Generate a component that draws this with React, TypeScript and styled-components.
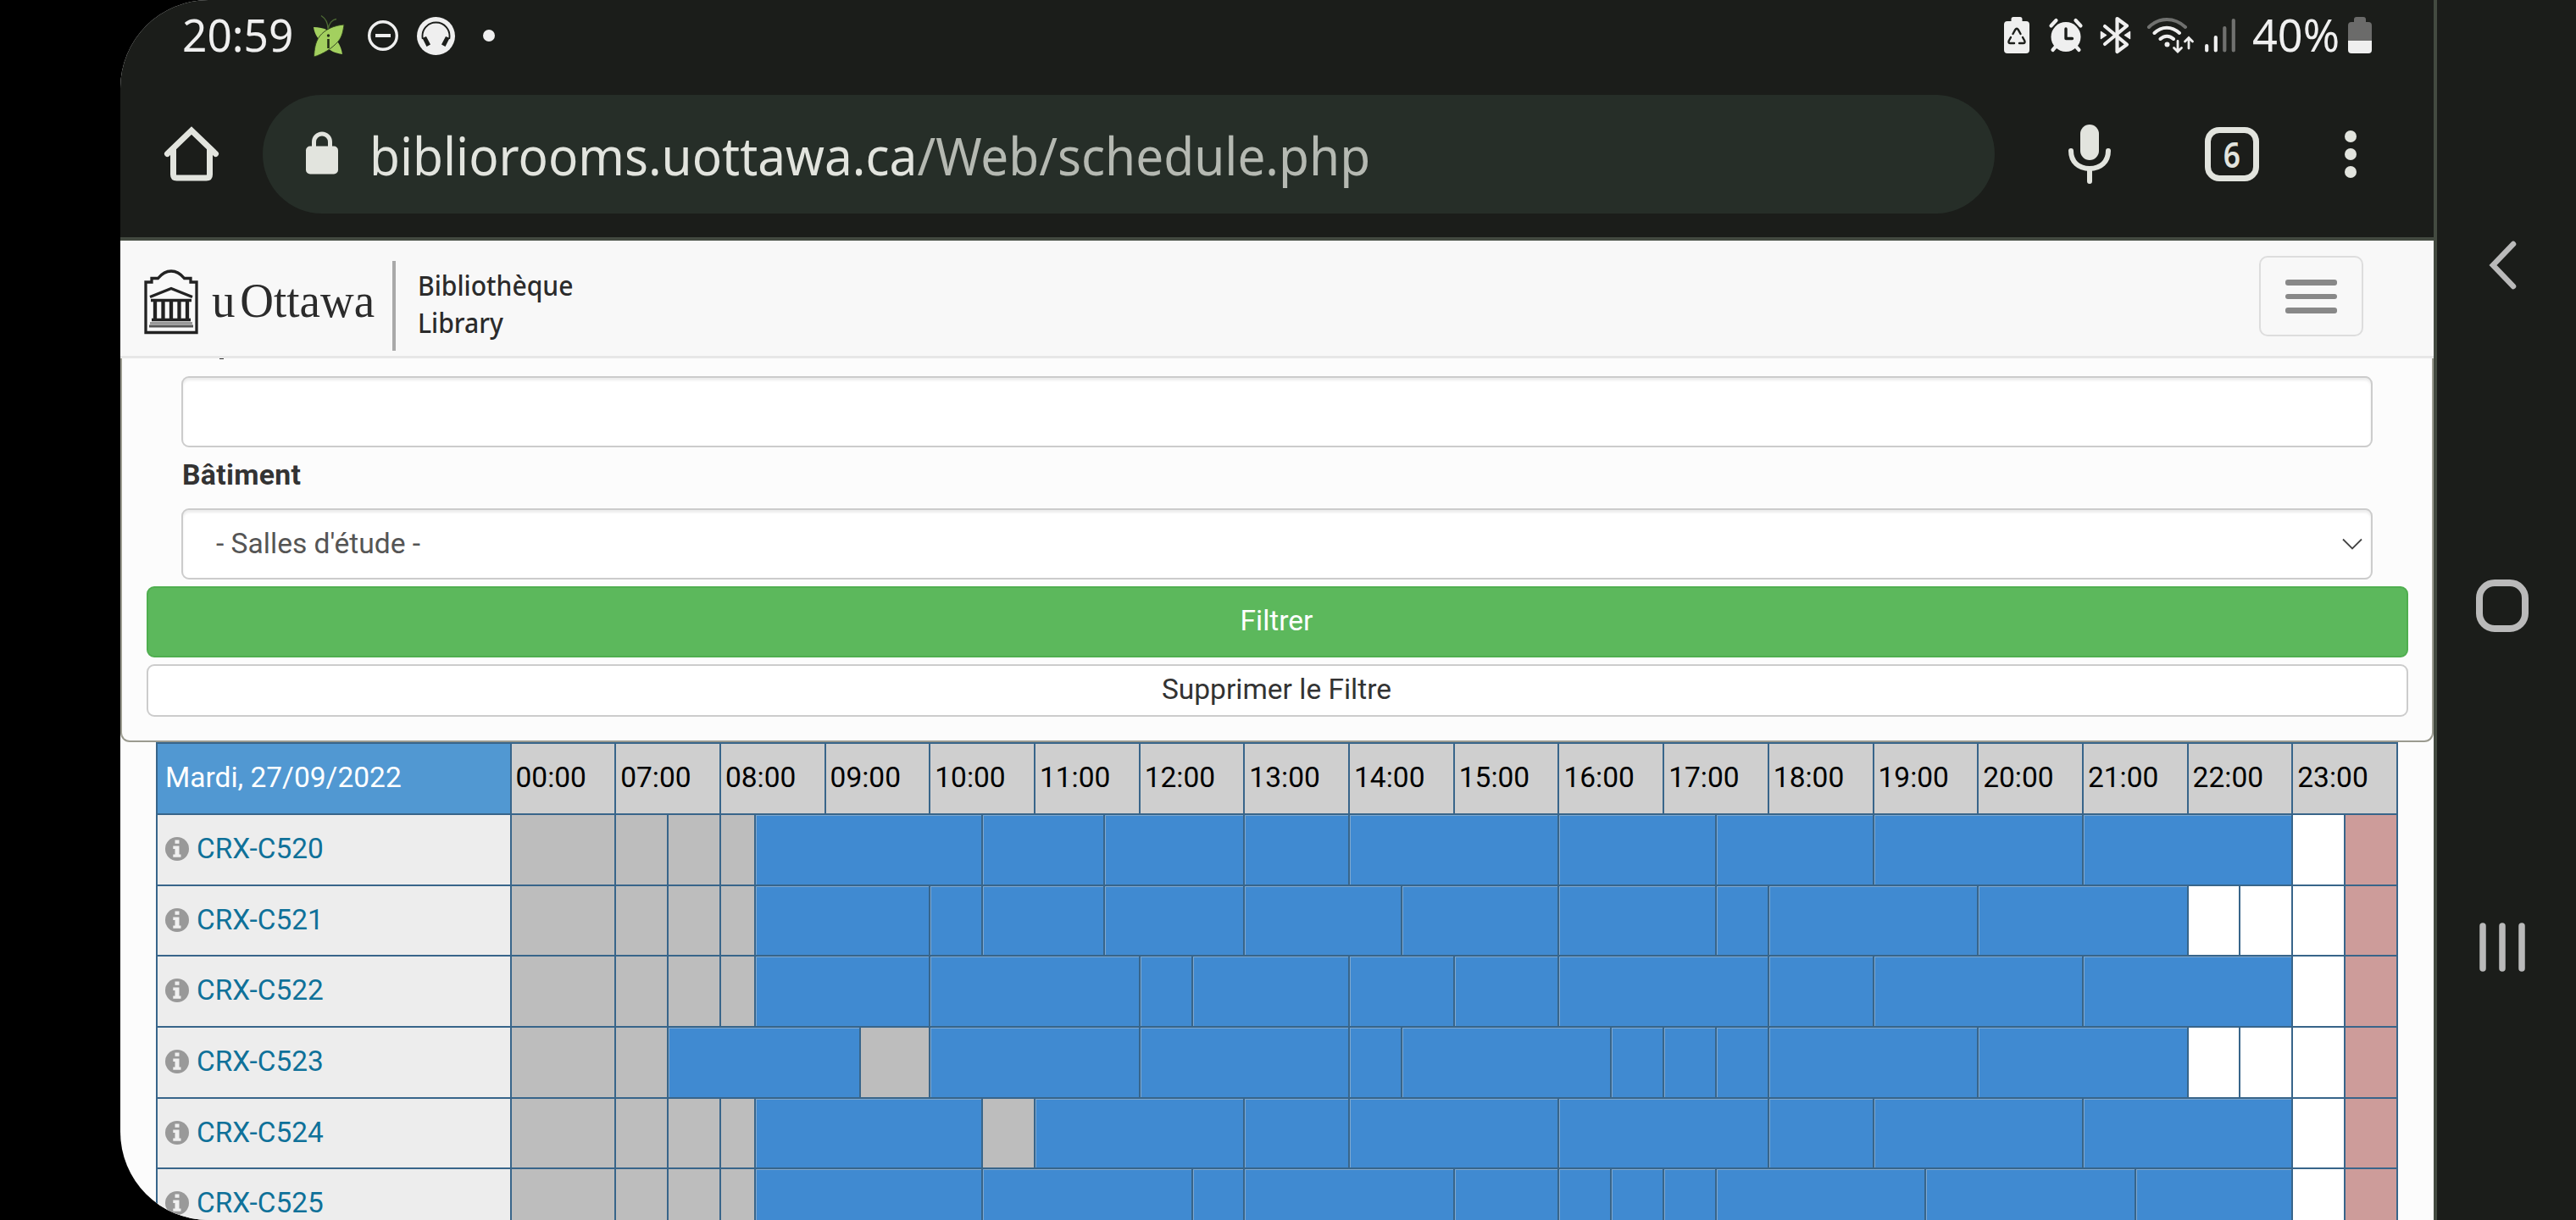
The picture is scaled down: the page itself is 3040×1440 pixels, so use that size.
import React from "react";
import styled, { createGlobalStyle } from "styled-components";

const GlobalStyle = createGlobalStyle`
  *, *::before, *::after { box-sizing: border-box; }
  body { margin: 0; background: #000; overflow: hidden; }
`;

const ui = `"Noto Sans", "Open Sans", sans-serif`;
const web = `Roboto, "Liberation Sans", sans-serif`;
const ink = "#38658a";

const Screen = styled.div`
  display: flex;
  width: 3040px;
  height: 1440px;
  padding-left: 142px;
  background: #000;
  overflow: hidden;
`;

const Browser = styled.main`
  display: flex;
  flex-direction: column;
  width: 2730px;
  height: 1440px;
  background: #fcfcfc;
  border-radius: 104px 0 0 104px;
  overflow: hidden;
`;

const BrowserTop = styled.header`
  flex: none;
  height: 284px;
  background: #1b1d1a;
  border-bottom: 4px solid #434a40;
`;

const StatusBar = styled.div`
  display: flex;
  height: 84px;
  padding: 0 73px 0 73px;
  justify-content: space-between;
`;

const StatusGroup = styled.div`
  display: flex;
  align-items: flex-start;
`;

const Glyph = styled.svg<{ $ml?: number; $mt?: number }>`
  flex: none;
  display: block;
  overflow: visible;
  margin-left: ${(p) => p.$ml ?? 0}px;
  margin-top: ${(p) => p.$mt ?? 0}px;
`;

const Squeezed = styled.span<{ $scale: number }>`
  display: inline-block;
  white-space: pre;
  transform: scaleX(${(p) => p.$scale});
  transform-origin: left center;
`;

const StatusText = styled.div<{ $w: number; $ml?: number }>`
  flex: none;
  width: ${(p) => p.$w}px;
  margin-left: ${(p) => p.$ml ?? 0}px;
  font: 400 53px/82px ${ui};
  color: #efefef;
  white-space: nowrap;
`;

const Toolbar = styled.div`
  display: flex;
  height: 196px;
  padding: 28px 0 0 52px;
`;

const AddressBar = styled.div`
  display: flex;
  flex: none;
  width: 2044px;
  height: 140px;
  margin-left: 52px;
  padding-left: 51px;
  border-radius: 70px;
  background: #262e28;
`;

const Url = styled.div`
  width: 1178px;
  margin-left: 37px;
  font: 400 62px/143px ${ui};
  color: #b5b9b2;
  white-space: nowrap;
`;

const Host = styled.span`
  color: #e2e4de;
`;

const TabCount = styled.div`
  flex: none;
  width: 64px;
  height: 64px;
  margin: 38px 0 0 111px;
  border: 7px solid #e2e4de;
  border-radius: 17px;
  font: 600 41px/51px ${ui};
  text-align: center;
  color: #e2e4de;
`;

const TabDigit = styled.span`
  display: inline-block;
  transform: scaleX(0.86);
`;

const Dots = styled.div`
  display: flex;
  flex-direction: column;
  gap: 7px;
  margin: 42px 0 0 101px;
`;

const Dot = styled.i`
  width: 14px;
  height: 14px;
  border-radius: 50%;
  background: #e2e4de;
`;

const SiteHeader = styled.div`
  flex: none;
  display: flex;
  height: 139px;
  padding-left: 28px;
  background: #f8f8f8;
  border-bottom: 3px solid #e7e7e7;
`;

const Wordmark = styled.div`
  width: 213px;
  margin-left: 16px;
  font: 400 57px/142px "Liberation Serif", serif;
  color: #2b2b2b;
  white-space: nowrap;
`;

const WordmarkU = styled.span`
  margin-right: 6px;
`;

const LogoRule = styled.div`
  width: 4px;
  height: 106px;
  margin-top: 24px;
  background: #a9a9a9;
`;

const Library = styled.div`
  display: flex;
  flex-direction: column;
  margin: 31px 0 0 26px;
  font: 500 32px/44px ${ui};
  color: #2b2b2b;
`;

const MenuButton = styled.button`
  display: flex;
  flex-direction: column;
  align-items: center;
  gap: 10px;
  width: 123px;
  height: 95px;
  margin: 18px 83px 0 auto;
  padding: 26px 0 0;
  border: 2px solid #ddd;
  border-radius: 10px;
  background: transparent;
`;

const MenuBar = styled.span`
  width: 61px;
  height: 6.5px;
  border-radius: 3px;
  background: #888;
`;

const FilterPanel = styled.section`
  flex: none;
  height: 453px;
  padding: 0 28px 0;
  border: 2px solid #9b9b90;
  border-top: 0;
  border-radius: 0 0 11px 11px;
  background: #fcfcfc;
`;

const Field = styled.div`
  display: flex;
  align-items: center;
  justify-content: space-between;
  height: 84px;
  margin: 0 42px;
  padding: 0 10px 0 39px;
  border: 2.5px solid #ccc;
  border-radius: 9px;
  background: #fff;
  box-shadow: inset 0 3px 3px rgba(0, 0, 0, 0.075);
  font: 400 33.6px/80px ${web};
  color: #555;
`;

const LabelTail = styled.div`
  width: 5px;
  height: 1px;
  margin: 0 0 20px 87px;
  background: #333;
`;

const FieldLabel = styled.div`
  height: 72px;
  margin: 0 43px;
  font: 700 33.8px/66px ${web};
  letter-spacing: 0.3px;
  color: #333;
`;

const PanelButton = styled.button<{ $primary?: boolean }>`
  display: block;
  width: 2669px;
  height: ${(p) => (p.$primary ? 84 : 62)}px;
  margin: 8px 0 0 1px;
  padding: 0 2px 2px 0;
  border: 2.5px solid ${(p) => (p.$primary ? "#4fae4f" : "#ccc")};
  border-radius: 9px;
  background: ${(p) => (p.$primary ? "#5cb85c" : "#fff")};
  color: ${(p) => (p.$primary ? "#fff" : "#333")};
  font: 400 33.5px/1 ${web};
`;

const Schedule = styled.section`
  flex: none;
  width: 2646px;
  margin-left: 42px;
  border: 2px solid ${ink};
  border-bottom: 0;
`;

const Row = styled.div<{ $h: number }>`
  display: grid;
  grid-template-columns: 415.5px repeat(108, 1fr);
  height: ${(p) => p.$h}px;
`;

const Head = styled.div<{ $day?: boolean }>`
  grid-column: span ${(p) => (p.$day ? 1 : 6)};
  padding-left: ${(p) => (p.$day ? 9 : 5)}px;
  border-left: ${(p) => (p.$day ? 0 : 2)}px solid ${ink};
  background: ${(p) => (p.$day ? "#5198d2" : "#cfcfcf")};
  color: ${(p) => (p.$day ? "#fff" : "#000")};
  font: 400 33.5px/79px ${web};
  white-space: nowrap;
`;

const RoomCell = styled.div`
  display: flex;
  align-items: center;
  gap: 9px;
  padding: 0 0 2px 9px;
  border-top: 2px solid ${ink};
  background: #ededed;
  color: #0f7199;
  font: 400 33.4px/80px ${web};
  white-space: nowrap;
`;

const fills = { past: "#bdbdbd", busy: "#408ad1", open: "#ffffff", shut: "#cd9c9a" };
type Kind = keyof typeof fills;

const Slot = styled.div<{ $kind: Kind; $span: number }>`
  grid-column: span ${(p) => p.$span};
  border-top: 2px solid ${ink};
  border-left: 2px solid ${ink};
  background: ${(p) => fills[p.$kind]};
  box-shadow: inset 1px 1px 0 rgba(205, 205, 205, ${(p) => (p.$kind === "busy" ? 0.45 : 0)});
`;

const NavBar = styled.nav`
  flex: none;
  display: flex;
  flex-direction: column;
  align-items: center;
  width: 168px;
  height: 1440px;
  padding-right: 10px;
  border-left: 4px solid #434a40;
  background: #1b1d1a;
`;

const hours = ["00:00", ...Array.from({ length: 17 }, (_, i) => `${String(i + 7).padStart(2, "0")}:00`)];

/* Slots are [kind, length]; one unit is ten minutes, the 00:00 column is six. */
const early: [Kind, number][] = [["past", 6], ["past", 3], ["past", 3], ["past", 2]];
const rooms: { name: string; slots: [Kind, number][] }[] = [
  {
    name: "CRX-C520",
    slots: [...early, ["busy", 13], ["busy", 7], ["busy", 8], ["busy", 6], ["busy", 12], ["busy", 9], ["busy", 9], ["busy", 12], ["busy", 12], ["open", 3], ["shut", 3]],
  },
  {
    name: "CRX-C521",
    slots: [...early, ["busy", 10], ["busy", 3], ["busy", 7], ["busy", 8], ["busy", 9], ["busy", 9], ["busy", 9], ["busy", 3], ["busy", 12], ["busy", 12], ["open", 3], ["open", 3], ["open", 3], ["shut", 3]],
  },
  {
    name: "CRX-C522",
    slots: [...early, ["busy", 10], ["busy", 12], ["busy", 3], ["busy", 9], ["busy", 6], ["busy", 6], ["busy", 12], ["busy", 6], ["busy", 12], ["busy", 12], ["open", 3], ["shut", 3]],
  },
  {
    name: "CRX-C523",
    slots: [["past", 6], ["past", 3], ["busy", 11], ["past", 4], ["busy", 12], ["busy", 12], ["busy", 3], ["busy", 12], ["busy", 3], ["busy", 3], ["busy", 3], ["busy", 12], ["busy", 12], ["open", 3], ["open", 3], ["open", 3], ["shut", 3]],
  },
  {
    name: "CRX-C524",
    slots: [...early, ["busy", 13], ["past", 3], ["busy", 12], ["busy", 6], ["busy", 12], ["busy", 12], ["busy", 6], ["busy", 12], ["busy", 12], ["open", 3], ["shut", 3]],
  },
  {
    name: "CRX-C525",
    slots: [...early, ["busy", 13], ["busy", 12], ["busy", 3], ["busy", 12], ["busy", 6], ["busy", 3], ["busy", 3], ["busy", 3], ["busy", 12], ["busy", 12], ["busy", 9], ["open", 3], ["shut", 3]],
  },
];

const InfoIcon = () => (
  <Glyph width="28" height="28" viewBox="0 0 28 28">
    <circle cx="14" cy="14" r="14" fill="#999" />
    <path d="M11.5 3.5h5v4.2h-5zM9.3 10.5h7.2v10h2v3.2H9.3v-3.2h2.2v-6.6H9.3z" fill="#f0f0f0" />
  </Glyph>
);

const LeftStatus = () => (
  <StatusGroup>
    <StatusText $w={155}><Squeezed $scale={0.97}>20:59</Squeezed></StatusText>
    <Glyph $mt={18} width="36" height="50" viewBox="0 0 36 50">
      <path d="M17 16C17 8 13 3 9 0.5M17.500 16C18 10 22 5 27 4.500" fill="none" stroke="#4e6b34" strokeWidth="1.300" />
      <path d="M0 14C6 14 12 15 17 18C26 26 33 36 34 46C26 45 19 42 14 36C6 30 1 22 0 14z" fill="#a3d05f" />
      <path d="M36 11C25 12 14 16 7 25C2 32 1 40 0.500 49C11 46 22 39 29 31C34 25 35 18 36 11z" fill="#a3d05f" stroke="#2a3a1a" strokeWidth="0.900" />
      <path d="M17.500 28v11" stroke="#222c16" strokeWidth="2.600" />
      <circle cx="17.500" cy="24" r="1.700" fill="#222c16" />
    </Glyph>
    <Glyph $ml={28} $mt={24} width="36" height="36" viewBox="0 0 36 36">
      <circle cx="18" cy="18" r="16.300" fill="none" stroke="#efefef" strokeWidth="3.400" />
      <path d="M9 18h18" stroke="#efefef" strokeWidth="4" />
    </Glyph>
    <Glyph $ml={22} $mt={20} width="45" height="45" viewBox="0 0 45 45">
      <circle cx="22.500" cy="22.500" r="22.500" fill="#efefef" />
      <path d="M6.800 26c-2-11 6-19.500 15.700-19.500S40.200 15 38.200 26" fill="none" stroke="#1b1d1a" strokeWidth="1.900" />
      <path d="M6.500 25l4.500-2 5 9.500-4.500 2.500zM38.500 25l-4.500-2-5 9.500 4.500 2.500z" fill="#1b1d1a" />
    </Glyph>
    <Glyph $ml={33} $mt={35} width="14" height="14" viewBox="0 0 14 14">
      <circle cx="7" cy="7" r="7" fill="#efefef" />
    </Glyph>
  </StatusGroup>
);

const RightStatus = () => (
  <StatusGroup>
    <Glyph $mt={20} width="30" height="43" viewBox="0 0 30 43">
      <path d="M11 0h8q2.500 0 2.500 2.500V5H26q4 0 4 4v30q0 4-4 4H4q-4 0-4-4V9q0-4 4-4h4.500V2.500Q8.500 0 11 0z" fill="#efefef" />
      <path d="M10.500 20l2.800-5q1.700-2.500 3.400 0l2.800 5M22 24l2.300 4.200q1 2.800-1.800 2.800H18M12 31H7.500q-2.800 0-1.800-2.800L8 24" fill="none" stroke="#1b1d1a" strokeWidth="2.400" strokeLinecap="round" />
    </Glyph>
    <Glyph $ml={22.5} $mt={22} width="40" height="40" viewBox="0 0 40 40">
      <circle cx="20" cy="21.500" r="17.500" fill="#efefef" />
      <path d="M2.500 8.500l6-6.500M37.500 8.500l-6-6.500M8 33l-3.500 4M32 33l3.500 4" stroke="#efefef" strokeWidth="4.200" strokeLinecap="round" />
      <path d="M20 12v11.500h7.500" fill="none" stroke="#1b1d1a" strokeWidth="3.400" strokeLinecap="round" strokeLinejoin="round" />
    </Glyph>
    <Glyph $ml={20.5} $mt={20} width="37" height="43" viewBox="0 0 37 43">
      <path d="M6 11l26 21.500L20.500 41V2L32 10.500 6 32" fill="none" stroke="#efefef" strokeWidth="4.200" strokeLinecap="round" strokeLinejoin="round" />
      <path d="M1.500 17.500l6 4-6 4zM35.500 17.500l-6 4 6 4z" fill="#efefef" stroke="#efefef" strokeWidth="1.500" strokeLinejoin="round" />
    </Glyph>
    <Glyph $ml={18.5} $mt={21} width="55" height="42" viewBox="0 0 55 42">
      <g fill="none" strokeWidth="4" strokeLinecap="round">
        <path d="M2 11C14 -1 32 -1 45 11" stroke="#70716f" />
        <path d="M8.500 18C17 9.500 29 9.500 38 18M15.500 25c4.500-4.500 11-4.500 15.500 0" stroke="#efefef" />
        <path d="M36 27.500v12M31.500 35.500l4.500 4.500 4.500-4.500M49 36V24.500M44.500 28l4.500-4.500 4.500 4.500" stroke="#efefef" strokeWidth="2.800" />
      </g>
      <circle cx="23.500" cy="31.500" r="3" fill="#efefef" />
    </Glyph>
    <Glyph $ml={13.5} $mt={22} width="36" height="40" viewBox="0 0 36 40">
      <g strokeWidth="4.200" strokeLinecap="round">
        <path d="M2.200 32v5.500M12.800 22v15.500" stroke="#efefef" />
        <path d="M23.300 11v26.500M33.800 2v35.500" stroke="#70716f" />
      </g>
    </Glyph>
    <StatusText $w={113} $ml={20}><Squeezed $scale={0.985}>40%</Squeezed></StatusText>
    <Glyph $mt={20} width="28" height="43" viewBox="0 0 28 43">
      <path d="M10 0h8q3 0 3 3v3h3q4 0 4 4v18H0V10q0-4 4-4h3V3q0-3 3-3z" fill="#6b6b6a" />
      <path d="M0 28h28v11q0 4-4 4H4q-4 0-4-4z" fill="#efefef" />
    </Glyph>
  </StatusGroup>
);

const BuildingLogo = () => (
  <Glyph $mt={34} width="64" height="77" viewBox="0 0 64 77">
    <path d="M2 74.500V15h7v-4.500h7.500C21 5 26 2 32 2s11 3 15.500 8.500H55V15h7v59.500z" fill="none" stroke="#222" strokeWidth="3.300" />
    <path d="M7 32.500L32 22.500l25 10" fill="none" stroke="#222" strokeWidth="3.200" />
    <path d="M8 36.500h48M9 59.500h46" stroke="#222" strokeWidth="3.400" />
    <path d="M13 36v23M22.500 36v23M32 36v23M41.500 36v23M51 36v23" stroke="#222" strokeWidth="4.300" />
    <path d="M7 63.500h50" stroke="#999" strokeWidth="3" />
    <path d="M6 67h52" stroke="#555" strokeWidth="3" />
  </Glyph>
);

export default function App() {
  return (
    <Screen>
      <GlobalStyle />
      <Browser>
        <BrowserTop>
          <StatusBar>
            <LeftStatus />
            <RightStatus />
          </StatusBar>
          <Toolbar>
            <Glyph $mt={38} width="64" height="64" viewBox="0 0 64 64">
              <path d="M3.500 31.500L32 4l28.500 27.500M10.500 26v30q0 4 4 4h35q4 0 4-4V26" fill="none" stroke="#e2e4de" strokeWidth="7" strokeLinecap="round" />
            </Glyph>
            <AddressBar>
              <Glyph $mt={44} width="38" height="50" viewBox="0 0 38 50">
                <rect x="0" y="16.500" width="38" height="33" rx="5" fill="#e2e4de" />
                <path d="M9.500 18v-6.500a9.500 9.500 0 0 1 19 0V18" fill="none" stroke="#e2e4de" strokeWidth="5" />
              </Glyph>
              <Url>
                <Squeezed $scale={0.943}><Host>bibliorooms.uottawa.ca</Host>/Web/schedule.php</Squeezed>
              </Url>
            </AddressBar>
            <Glyph $ml={87} $mt={35} width="50" height="70" viewBox="0 0 50 70">
              <rect x="14" y="0" width="22" height="42" rx="11" fill="#e2e4de" />
              <path d="M3 31c0 13 9 21 22 21s22-8 22-21M25 52v15" fill="none" stroke="#e2e4de" strokeWidth="6" strokeLinecap="round" />
            </Glyph>
            <TabCount><TabDigit>6</TabDigit></TabCount>
            <Dots><Dot /><Dot /><Dot /></Dots>
          </Toolbar>
        </BrowserTop>
        <SiteHeader>
          <BuildingLogo />
          <Wordmark><Squeezed $scale={0.965}><WordmarkU>u</WordmarkU>Ottawa</Squeezed></Wordmark>
          <LogoRule />
          <Library>
            <Squeezed $scale={0.94}>Bibliothèque</Squeezed>
            <Squeezed $scale={0.94}>Library</Squeezed>
          </Library>
          <MenuButton><MenuBar /><MenuBar /><MenuBar /></MenuButton>
        </SiteHeader>
        <FilterPanel>
          <LabelTail />
          <Field />
          <FieldLabel>Bâtiment</FieldLabel>
          <Field>
            - Salles d'étude -
            <Glyph width="24" height="14" viewBox="0 0 24 14">
              <path d="M1 1.500l11 11 11-11" fill="none" stroke="#444" strokeWidth="1.800" />
            </Glyph>
          </Field>
          <PanelButton $primary>Filtrer</PanelButton>
          <PanelButton>Supprimer le Filtre</PanelButton>
        </FilterPanel>
        <Schedule>
          <Row $h={82.3}>
            <Head $day>Mardi, 27/09/2022</Head>
            {hours.map((h) => <Head key={h}>{h}</Head>)}
          </Row>
          {rooms.map((room) => (
            <Row key={room.name} $h={83.6}>
              <RoomCell><InfoIcon />{room.name}</RoomCell>
              {room.slots.map(([kind, span], i) => <Slot key={i} $kind={kind} $span={span} />)}
            </Row>
          ))}
        </Schedule>
      </Browser>
      <NavBar>
        <Glyph $mt={284} width="34" height="58" viewBox="0 0 34 58">
          <path d="M30 4L6 29l24 25" fill="none" stroke="#bababa" strokeWidth="6.500" strokeLinecap="round" />
        </Glyph>
        <Glyph $mt={342} width="62" height="62" viewBox="0 0 62 62">
          <rect x="4" y="4" width="54" height="54" rx="18" fill="none" stroke="#bababa" strokeWidth="8" />
        </Glyph>
        <Glyph $mt={343} width="54" height="58" viewBox="0 0 54 58">
          <path d="M4 4v50M27 4v50M50 4v50" stroke="#bababa" strokeWidth="7.500" strokeLinecap="round" />
        </Glyph>
      </NavBar>
    </Screen>
  );
}
